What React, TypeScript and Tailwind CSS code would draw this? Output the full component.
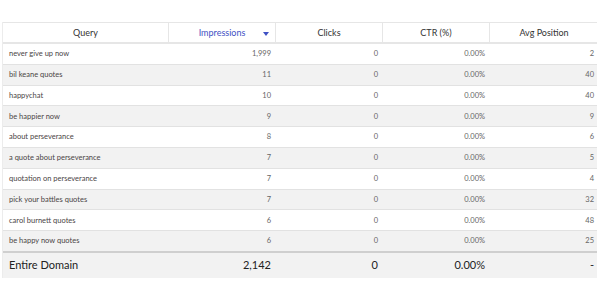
const rows = [
  { q: "never give up now", imp: "1,999", pos: "2" },
  { q: "bil keane quotes", imp: "11", pos: "40" },
  { q: "happychat", imp: "10", pos: "40" },
  { q: "be happier now", imp: "9", pos: "9" },
  { q: "about perseverance", imp: "8", pos: "6" },
  { q: "a quote about perseverance", imp: "7", pos: "5" },
  { q: "quotation on perseverance", imp: "7", pos: "4" },
  { q: "pick your battles quotes", imp: "7", pos: "32" },
  { q: "carol burnett quotes", imp: "6", pos: "48" },
  { q: "be happy now quotes", imp: "6", pos: "25" },
];

const cols = "grid grid-cols-[166px_107px_107px_107px_108px]";

export default function App() {
  return (
    <div
      className="w-[600px] h-[300px] bg-white pt-[22px] pl-[2px]"
      style={{ fontFamily: "Lato, 'Liberation Sans', sans-serif" }}
    >
      <div className="w-[595px] border-l border-[#ececec]">
        {/* header */}
        <div className={`${cols} h-[22px] border-t border-b-2 border-[#e6e6e6] text-[9px] text-[#333]`}>
          <div className="flex items-center justify-center border-r border-[#e6e6e6]">Query</div>
          <div className="relative flex items-center justify-center border-r border-[#e6e6e6] text-[#3f51c4]">
            Impressions
            <svg className="absolute right-[6px] top-[9px]" width="6" height="4" viewBox="0 0 6 4">
              <path d="M0 0H6L3 4Z" fill="#3f51c4" />
            </svg>
          </div>
          <div className="flex items-center justify-center border-r border-[#e6e6e6]">Clicks</div>
          <div className="flex items-center justify-center border-r border-[#e6e6e6]">CTR (%)</div>
          <div className="flex items-center justify-center">Avg Position</div>
        </div>

        {/* body */}
        {rows.map((r, i) => (
          <div
            key={i}
            className={`${cols} h-[20.8px] border-b border-[#e2e2e2] text-[7.5px] text-[#666] ${
              i % 2 === 1 ? "bg-[#f2f2f2]" : "bg-white"
            }`}
          >
            <div className="flex items-center pl-[6px] text-[#4a4545]">{r.q}</div>
            <div className="flex items-center justify-end pr-[5px]">{r.imp}</div>
            <div className="flex items-center justify-end pr-[5px]">0</div>
            <div className="flex items-center justify-end pr-[5px]">0.00%</div>
            <div className="flex items-center justify-end pr-[4px]">{r.pos}</div>
          </div>
        ))}

        {/* footer */}
        <div className={`${cols} h-[27px] -mt-px border-t-2 border-[#cfcfcf] bg-[#f2f2f2] text-[11px] text-[#222]`}>
          <div className="flex items-center pl-[6px]">Entire Domain</div>
          <div className="flex items-center justify-end pr-[5px]">2,142</div>
          <div className="flex items-center justify-end pr-[5px]">0</div>
          <div className="flex items-center justify-end pr-[5px]">0.00%</div>
          <div className="flex items-center justify-end pr-[4px]">-</div>
        </div>
      </div>
    </div>
  );
}
